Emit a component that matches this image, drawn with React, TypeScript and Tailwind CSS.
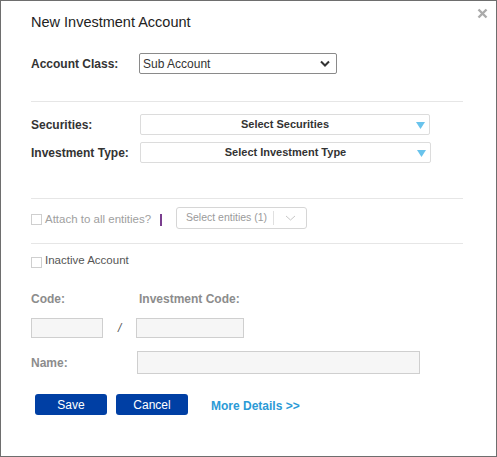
import { Component } from "react";

const font = { fontFamily: '"Liberation Sans", Arial, sans-serif' };

class App extends Component {
  render() {
    return (
      <div
        className="relative w-[497px] h-[457px] bg-white border border-[#6e6e6e] text-[#333]"
        style={font}
      >
        <svg className="absolute left-[476px] top-[7px]" width="11" height="11" viewBox="0 0 11 11">
          <path d="M1.5 1.5 L9.5 9.5 M9.5 1.5 L1.5 9.5" stroke="#ababab" strokeWidth="2.4" />
        </svg>
        <div className="pl-[30px] flex flex-col">
          <div className="mt-[12px] h-[20px] flex items-center text-[14.5px] text-[#222]">
            New Investment Account
          </div>

          <div className="mt-[20px] h-[21px] flex items-center">
            <div className="w-[108px] text-[12px] font-bold text-[#333]">
              Account Class:
            </div>
            <div className="w-[198px] h-[21px] border border-[#8a8a8a] rounded-[2px] flex items-center justify-between pl-[3px] pr-[6px] text-[12px] text-[#333]">
              <span>Sub Account</span>
              <svg width="10" height="7" viewBox="0 0 10 7">
                <path d="M1 1.5 L5 5.5 L9 1.5" fill="none" stroke="#333" strokeWidth="2" />
              </svg>
            </div>
          </div>

          <div className="mt-[27px] w-[432px] h-px bg-[#e6e6e6]" />

          <div className="mt-[12px] h-[21px] flex items-center">
            <div className="w-[109px] text-[12px] font-bold text-[#333]">Securities:</div>
            <div className="w-[290px] h-[21px] border border-[#dcdcdc] rounded-[2px] flex items-center relative text-[11px] font-bold text-[#333]">
              <span className="flex-1 text-center">Select Securities</span>
              <svg className="absolute right-[4px] top-[7px]" width="9" height="7" viewBox="0 0 9 7">
                <path d="M0 0 H9 L4.5 7 Z" fill="#69c3ec" />
              </svg>
            </div>
          </div>

          <div className="mt-[7px] h-[21px] flex items-center">
            <div className="w-[109px] text-[12px] font-bold text-[#333]">Investment Type:</div>
            <div className="w-[291px] h-[21px] border border-[#dcdcdc] rounded-[2px] flex items-center relative text-[11px] font-bold text-[#333]">
              <span className="flex-1 text-center">Select Investment Type</span>
              <svg className="absolute right-[4px] top-[7px]" width="9" height="7" viewBox="0 0 9 7">
                <path d="M0 0 H9 L4.5 7 Z" fill="#69c3ec" />
              </svg>
            </div>
          </div>

          <div className="mt-[35px] w-[432px] h-px bg-[#e6e6e6]" />

          <div className="mt-[8px] h-[22px] flex items-center">
            <div className="w-[11px] h-[11px] border border-[#cfcfcf] mt-[3px]" />
            <span className="ml-[3px] mt-[3px] w-[115px] text-[11.5px] text-[#a0a0a0] whitespace-nowrap">
              Attach to all entities?
            </span>
            <div className="mt-[4px] w-[2px] h-[12px] bg-[#7a3e8f]" />
            <div className="ml-[14px] w-[131px] h-[22px] border border-[#d6d6d6] rounded-[3px] flex items-center">
              <span className="pl-[9px] w-[96px] text-[10.5px] text-[#9a9a9a] whitespace-nowrap">
                Select entities (1)
              </span>
              <div className="w-px h-[14px] bg-[#e0e0e0]" />
              <svg className="ml-[11px]" width="11" height="6" viewBox="0 0 11 6">
                <path d="M1 1 L5.5 5 L10 1" fill="none" stroke="#c8c8c8" strokeWidth="1" />
              </svg>
            </div>
          </div>

          <div className="mt-[14px] w-[432px] h-px bg-[#e6e6e6]" />

          <div className="mt-[9px] h-[16px] flex items-center">
            <div className="w-[11px] h-[11px] border border-[#cfcfcf] mt-[3px]" />
            <span className="ml-[3px] text-[11.5px] text-[#555]">Inactive Account</span>
          </div>

          <div className="mt-[22px] h-[16px] flex items-center text-[12px] font-bold text-[#8c8c8c]">
            <div className="w-[108px]">Code:</div>
            <div>Investment Code:</div>
          </div>

          <div className="mt-[11px] h-[20px] flex items-center">
            <div className="w-[72px] h-[20px] bg-[#f6f6f6] border border-[#cfcfcf]" />
            <span className="ml-[15px] w-[18px] text-[12px] text-[#555] italic">/</span>
            <div className="w-[108px] h-[20px] bg-[#f6f6f6] border border-[#cfcfcf]" />
          </div>

          <div className="mt-[13px] h-[23px] flex items-center">
            <div className="w-[106px] text-[12px] font-bold text-[#8c8c8c]">Name:</div>
            <div className="w-[283px] h-[23px] bg-[#f6f6f6] border border-[#cfcfcf]" />
          </div>

          <div className="mt-[20px] h-[21px] flex items-center pl-[4px]">
            <button className="w-[72px] h-[21px] bg-[#003fa4] rounded-[3px] text-white text-[12px]">
              Save
            </button>
            <button className="ml-[9px] w-[72px] h-[21px] bg-[#003fa4] rounded-[3px] text-white text-[12px]">
              Cancel
            </button>
            <span className="ml-[23px] mt-[3px] text-[12px] font-bold text-[#2b9ad6]">
              More Details &gt;&gt;
            </span>
          </div>
        </div>
      </div>
    );
  }
}

export default App;
